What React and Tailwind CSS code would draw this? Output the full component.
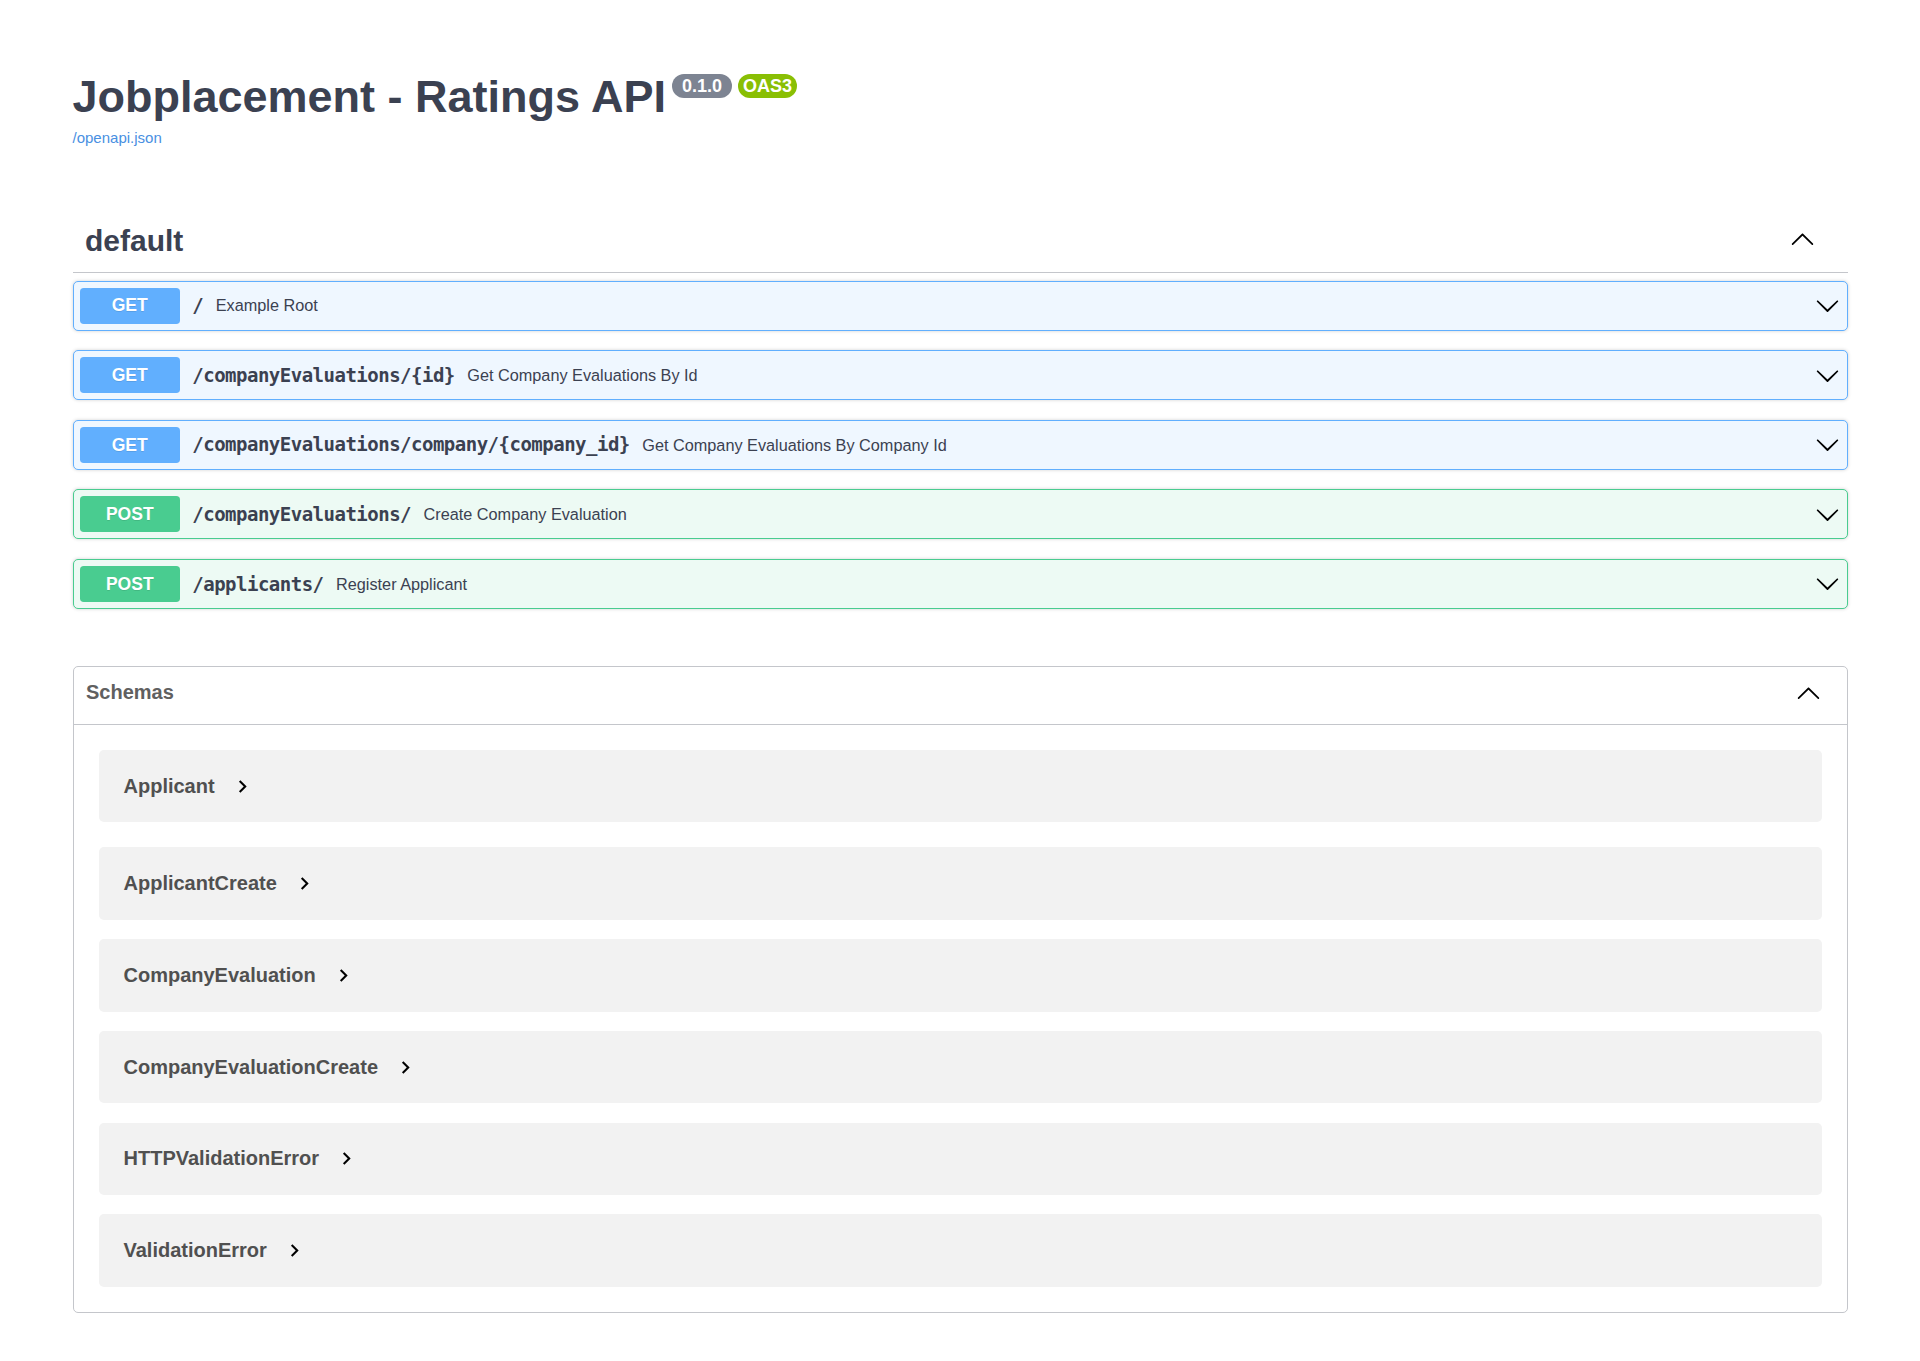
import React from "react";

const UP =
  "M 17.418 14.908 C 17.69 15.176 18.127 15.176 18.397 14.908 C 18.667 14.64 18.668 14.207 18.397 13.939 L 10.489 6.109 C 10.219 5.841 9.782 5.841 9.51 6.109 L 1.602 13.939 C 1.332 14.207 1.332 14.64 1.602 14.908 C 1.873 15.176 2.311 15.176 2.581 14.908 L 10 7.767 L 17.418 14.908 Z";
const DOWN =
  "M17.418 6.109c.272-.268.709-.268.979 0s.271.701 0 .969l-7.908 7.83c-.27.268-.707.268-.979 0l-7.908-7.83c-.27-.268-.27-.701 0-.969.271-.268.709-.268.979 0L10 13.25l7.418-7.141z";

function ArrowUp({ className }) {
  return (
    <svg className={className} viewBox="0 0 20 20" fill="#000">
      <path d={UP} />
    </svg>
  );
}

function ArrowDown({ className }) {
  return (
    <svg className={className} viewBox="0 0 20 20" fill="#000">
      <path d={DOWN} />
    </svg>
  );
}

const ops = [
  { method: "GET", path: "/", desc: "Example Root" },
  { method: "GET", path: "/companyEvaluations/{id}", desc: "Get Company Evaluations By Id" },
  { method: "GET", path: "/companyEvaluations/company/{company_id}", desc: "Get Company Evaluations By Company Id" },
  { method: "POST", path: "/companyEvaluations/", desc: "Create Company Evaluation" },
  { method: "POST", path: "/applicants/", desc: "Register Applicant" },
];

const schemas = [
  "Applicant",
  "ApplicantCreate",
  "CompanyEvaluation",
  "CompanyEvaluationCreate",
  "HTTPValidationError",
  "ValidationError",
];

function OpBlock({ method, path, desc }) {
  const get = method === "GET";
  return (
    <div
      className={
        "flex h-[50px] items-center rounded-[5px] border px-[6.25px] shadow-[0_0_3.75px_rgba(0,0,0,0.19)] " +
        (get ? "border-[#61affe] bg-[#eff7ff]" : "border-[#49cc90] bg-[#edfaf4]")
      }
    >
      <span
        className={
          "flex h-[36px] w-[100px] shrink-0 items-center justify-center rounded-[3.75px] text-[17.5px] font-bold text-white [text-shadow:0_1px_0_rgba(0,0,0,0.1)] " +
          (get ? "bg-[#61affe]" : "bg-[#49cc90]")
        }
      >
        {method}
      </span>
      <span className="px-[12.5px] font-['DejaVu_Sans_Mono',monospace] text-[19px] font-bold tracking-[-0.5px] text-[#3b4151]">
        {path}
      </span>
      <span className="flex-1 text-[16.25px] text-[#3b4151]">{desc}</span>
      <ArrowDown className="h-[25px] w-[25px] shrink-0" />
    </div>
  );
}

export default function App() {
  return (
    <div className="min-h-screen bg-white font-['Liberation_Sans',Arial,sans-serif] text-[#3b4151]">
      <div className="mx-auto max-w-[1825px] px-[25px] pt-[71px] pb-[48px]">
        {/* Info */}
        <div className="flex items-start">
          <h2 className="m-0 text-[45px] font-bold leading-[52px] text-[#3b4151]">
            Jobplacement - Ratings API
          </h2>
          <div className="ml-[6px] mt-[3px] flex gap-[6px]">
            <span className="h-[24px] whitespace-pre rounded-full bg-[#7d8492] px-[5px] text-[18px] font-bold leading-[24px] text-white">
              {" 0.1.0 "}
            </span>
            <span className="h-[24px] rounded-full bg-[#89bf04] px-[5px] text-[18px] font-bold leading-[24px] text-white">
              OAS3
            </span>
          </div>
        </div>
        <div className="mt-[6px] text-[15px] leading-[18px]">
          <a className="text-[#4990e2]">/openapi.json</a>
        </div>

        {/* Tag */}
        <div className="mt-[64.5px] flex items-start border-b border-[#c4c6cb] pb-[13.5px] pl-[12.5px] pr-[33px] pt-[12.5px]">
          <span className="flex-1 text-[30px] font-bold leading-[34px] text-[#3b4151]">default</span>
          <ArrowUp className="mt-[1.5px] h-[25px] w-[25px] shrink-0" />
        </div>

        <div className="mt-[8px] flex flex-col gap-[19.6px]">
          {ops.map((o) => (
            <OpBlock key={o.method + o.path} {...o} />
          ))}
        </div>

        {/* Schemas */}
        <div className="mt-[57px] rounded-[5px] border border-[#c4c6cb]">
          <div className="flex h-[58px] items-start border-b border-[#c4c6cb] pl-[12.5px] pr-[25.5px] pt-[14px]">
            <span className="flex-1 text-[20px] font-bold leading-[23px] text-[#606060]">Schemas</span>
            <ArrowUp className="-mt-[1px] h-[25px] w-[25px] shrink-0" />
          </div>
          <div className="flex flex-col px-[25px] pb-[25px] pt-[25px]">
            {schemas.map((s, i) => (
              <div
                key={s}
                className={
                  "flex h-[72.5px] items-center rounded-[5px] bg-[#f2f2f2] pl-[25px] " +
                  (i === 0 ? "mb-[25px]" : i === schemas.length - 1 ? "" : "mb-[19.25px]")
                }
              >
                <span className="text-[20px] font-bold leading-[23px] text-[#505050]">{s}</span>
                <svg className="ml-[15px] h-[25px] w-[25px]" viewBox="0 0 24 24" fill="#000">
                  <path d="M10 6L8.59 7.41 13.17 12l-4.58 4.59L10 18l6-6z" />
                </svg>
              </div>
            ))}
          </div>
        </div>
      </div>
    </div>
  );
}
